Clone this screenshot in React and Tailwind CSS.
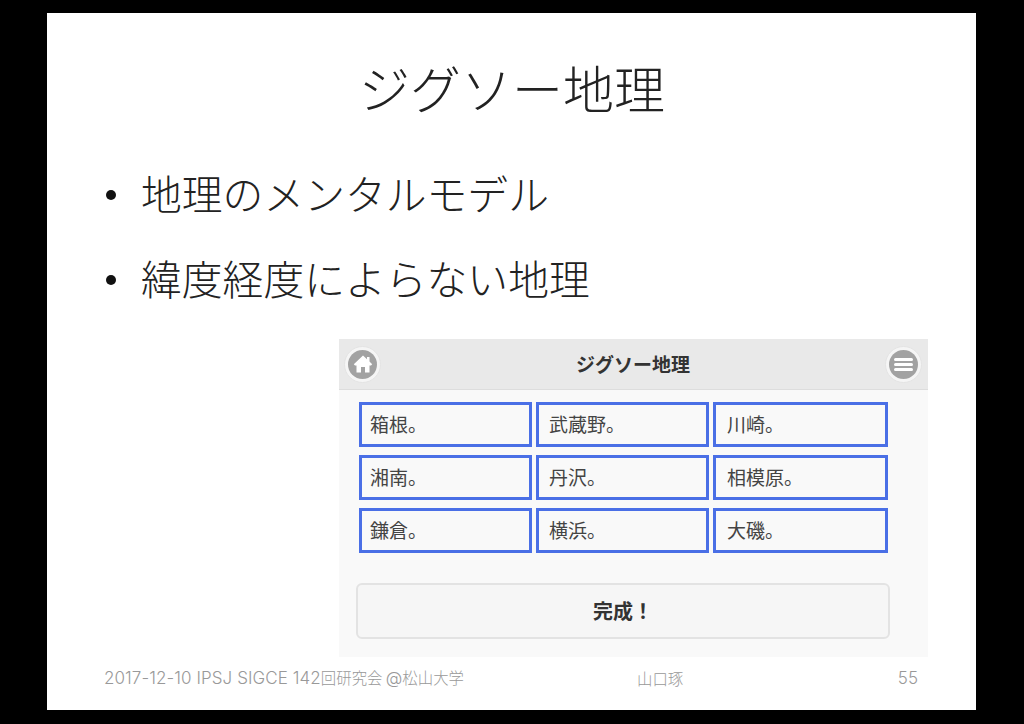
const cjk = { fontFamily: '"Noto Sans CJK JP", "Noto Sans", sans-serif' };
const latin = { fontFamily: '"Inter", "Noto Sans CJK JP", sans-serif' };

const places = ["箱根。", "武蔵野。", "川崎。", "湘南。", "丹沢。", "相模原。", "鎌倉。", "横浜。", "大磯。"];

function RoundIcon({ children }) {
  return (
    <div className="w-[37px] h-[37px] rounded-full bg-[#f5f5f5] border border-[#e4e4e4] flex items-center justify-center">
      <div className="w-[29px] h-[29px] rounded-full bg-[#a2a2a2] flex items-center justify-center">{children}</div>
    </div>
  );
}

export default function App() {
  return (
    <div className="w-[1024px] h-[724px] bg-black pt-[13px] pl-[47px] overflow-hidden" style={cjk}>
      <div className="w-[929px] h-[697px] bg-white flex flex-col">
        <h1 className="h-[126px] pt-[44px] pl-[1px] text-center text-[51px] leading-[60px] font-light text-[#222]">ジグソー地理</h1>
        <ul className="pl-[59px] text-[40.8px] leading-[60px] font-light text-[#222] flex flex-col gap-[25px] pt-[24px]">
          <li className="flex items-center gap-[25px]">
            <span className="w-[10px] h-[10px] mt-[3px] rounded-full bg-[#111]"></span>
            <span>地理のメンタルモデル</span>
          </li>
          <li className="flex items-center gap-[25px]">
            <span className="w-[10px] h-[10px] mt-[3px] rounded-full bg-[#111]"></span>
            <span>緯度経度によらない地理</span>
          </li>
        </ul>
        <div className="ml-[292px] mt-[31px] w-[589px] h-[318px] bg-[#f9f9f9] flex flex-col">
          <div className="h-[51px] bg-[#e9e9e9] border-b border-[#dddddd] flex items-center justify-between pl-[5px] pr-[6px]">
            <RoundIcon>
              <svg width="20" height="20" viewBox="0 0 20 20" fill="#ffffff">
                <path d="M10 1.500 .8 10.200 2 11.400H3.500V18.500H8V13H12V18.500H16.500V11.400H18L19.200 10.200 16.500 7.600V3H14V5.300z" />
              </svg>
            </RoundIcon>
            <span className="text-[19px] font-bold text-[#333]">ジグソー地理</span>
            <RoundIcon>
              <div className="flex flex-col gap-[2px]">
                <span className="block w-[19px] h-[3px] rounded-full bg-white"></span>
                <span className="block w-[19px] h-[3px] rounded-full bg-white"></span>
                <span className="block w-[19px] h-[3px] rounded-full bg-white"></span>
              </div>
            </RoundIcon>
          </div>
          <div className="ml-[20px] mt-[12px] w-[529px] grid grid-cols-[173px_173px_175px] grid-rows-[45px_45px_45px] gap-x-[4px] gap-y-[8px]">
            {places.map((p) => (
              <div key={p} className="border-[3px] border-[#4a6fe6] pl-[8px] [&:nth-child(3n+2)]:pl-[10px] [&:nth-child(3n)]:pl-[11px] flex items-center text-[19px] text-[#444]">{p}</div>
            ))}
          </div>
          <button className="ml-[17px] mt-[30px] w-[534px] h-[56px] rounded-[6px] bg-[#f6f6f6] border-2 border-[#e3e3e3] text-[20px] font-bold text-[#333]">完成！</button>
        </div>
        <div className="ml-[57px] mt-[12px] w-[814px] h-[20px] flex items-center text-[15.400px] text-[#999] font-light">
          <span className="w-[533px] whitespace-nowrap">
            <span className="text-[17px] tracking-[0.08px]" style={latin}>2017-12-10 IPSJ SIGCE 142</span>回研究会 <span className="text-[17px]" style={latin}>@</span>松山大学
          </span>
          <span>山口琢</span>
          <span className="ml-auto text-[17px]" style={latin}>55</span>
        </div>
      </div>
    </div>
  );
}
